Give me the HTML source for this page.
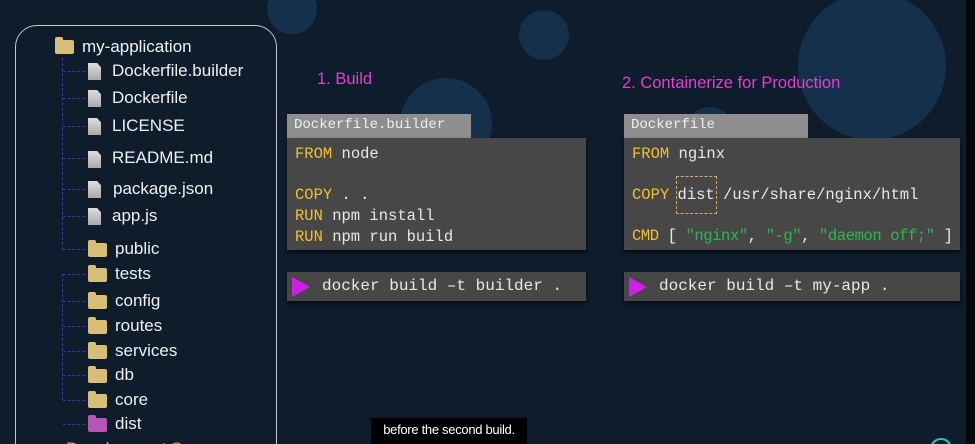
<!DOCTYPE html>
<html style="overflow:hidden;width:975px;height:444px"><head><meta charset="utf-8"><style>
*{margin:0;padding:0;box-sizing:border-box}
body{width:975px;height:444px;overflow:hidden;background:#0e1c2b;position:relative;font-family:"Liberation Sans",sans-serif}
.c{position:absolute;border-radius:50%;background:#15304a}
.panel{position:absolute;left:15px;top:25px;width:262px;height:440px;border:1.5px solid #c8c8c8;border-radius:22px}
.t{position:absolute;color:#f0f0f0;font-size:17px;line-height:20px}
.fo{position:absolute;width:19px;height:14px;background:#d9be78;border-radius:2px}
.fo:before{content:"";position:absolute;left:0;top:-3px;width:8px;height:4px;background:inherit;border-radius:2px 2px 0 0}
.fi{position:absolute;width:13px;height:17px;background:linear-gradient(#ddd,#aaa);clip-path:polygon(0 0,70% 0,100% 25%,100% 100%,0 100%)}
.h{position:absolute;border-top:1.3px dashed #4a2fa0;width:22px}
.v{position:absolute;border-left:1.3px dashed #4a2fa0}
.mono{font-family:"Liberation Mono",monospace;white-space:nowrap}
.hd{position:absolute;background:#8e8e8e;color:#efefef;font-size:14px;padding:3px 7px;height:24px}
.bd{position:absolute;background:#474747;color:#e8e8e8;font-size:15.5px;padding:6px 8px;line-height:20.7px;box-shadow:0 2px 3px #000a}
.k{color:#f0c030}.s{color:#2eb84e}
.cmd{position:absolute;background:#474747;color:#e8e8e8;font-size:16px;height:29px;line-height:29px;padding-left:35px;box-shadow:0 2px 3px #000a}
.tri{position:absolute;left:5px;top:5px;width:0;height:0;border-left:18px solid #d21fe8;border-top:10px solid transparent;border-bottom:10px solid transparent}
.ttl{position:absolute;color:#e23fd3;font-size:16.5px}
</style></head><body>
<div class="c" style="left:267px;top:-16px;width:50px;height:50px"></div>
<div class="c" style="left:519px;top:10px;width:50px;height:50px"></div>
<div class="c" style="left:400px;top:78px;width:92px;height:92px"></div>
<div class="c" style="left:798px;top:-8px;width:148px;height:148px"></div>
<div class="c" style="left:685px;top:107px;width:50px;height:50px"></div>
<div style="position:absolute;left:966px;top:0;width:9px;height:444px;background:#05090d"></div>

<div class="panel"></div>
<div class="fo" style="left:55px;top:40px"></div><div class="t" style="left:82px;top:37px">my-application</div>
<div class="v" style="left:62px;top:58px;height:192px"></div>
<div class="v" style="left:62px;top:274px;height:126px"></div>
<div class="h" style="left:63px;top:71px"></div><div class="fi" style="left:88px;top:63px"></div><div class="t" style="left:112px;top:61px">Dockerfile.builder</div>
<div class="h" style="left:63px;top:98px"></div><div class="fi" style="left:88px;top:90px"></div><div class="t" style="left:112px;top:88px">Dockerfile</div>
<div class="h" style="left:63px;top:126px"></div><div class="fi" style="left:88px;top:118px"></div><div class="t" style="left:112px;top:116px">LICENSE</div>
<div class="h" style="left:63px;top:158px"></div><div class="fi" style="left:88px;top:151px"></div><div class="t" style="left:112px;top:148px">README.md</div>
<div class="h" style="left:63px;top:189px"></div><div class="fi" style="left:88px;top:181px"></div><div class="t" style="left:113px;top:179px">package.json</div>
<div class="h" style="left:63px;top:216px"></div><div class="fi" style="left:88px;top:208px"></div><div class="t" style="left:112px;top:206px">app.js</div>
<div class="h" style="left:63px;top:249px"></div><div class="fo" style="left:88px;top:243px"></div><div class="t" style="left:115px;top:239px">public</div>
<div class="h" style="left:63px;top:274px"></div><div class="fo" style="left:88px;top:268px"></div><div class="t" style="left:115px;top:264px">tests</div>
<div class="h" style="left:63px;top:301px"></div><div class="fo" style="left:88px;top:295px"></div><div class="t" style="left:115px;top:291px">config</div>
<div class="h" style="left:63px;top:326px"></div><div class="fo" style="left:88px;top:320px"></div><div class="t" style="left:115px;top:316px">routes</div>
<div class="h" style="left:63px;top:351px"></div><div class="fo" style="left:88px;top:345px"></div><div class="t" style="left:115px;top:341px">services</div>
<div class="h" style="left:63px;top:375px"></div><div class="fo" style="left:88px;top:369px"></div><div class="t" style="left:115px;top:365px">db</div>
<div class="h" style="left:63px;top:400px"></div><div class="fo" style="left:88px;top:394px"></div><div class="t" style="left:115px;top:390px">core</div>
<div class="h" style="left:63px;top:424px"></div><div class="fo" style="left:88px;top:418px;background:#b655b6"></div><div class="t" style="left:115px;top:414px">dist</div>
<div class="t" style="left:66px;top:439px;color:#d9a640">Development S</div>

<div class="ttl" style="left:317px;top:70px">1. Build</div>
<div class="ttl" style="left:622px;top:74px">2. Containerize for Production</div>

<div class="hd mono" style="left:287px;top:114px;width:184px">Dockerfile.builder</div>
<div class="bd mono" style="left:287px;top:138px;width:299px;height:112px"><span class="k">FROM</span> node<br><br><span class="k">COPY</span> . .<br><span class="k">RUN</span> npm install<br><span class="k">RUN</span> npm run build</div>
<div class="cmd mono" style="left:287px;top:272px;width:299px"><div class="tri"></div>docker build –t builder .</div>

<div class="hd mono" style="left:624px;top:114px;width:184px">Dockerfile</div>
<div class="bd mono" style="left:624px;top:138px;width:336px;height:112px;line-height:20px"><span class="k">FROM</span> nginx<br><div style="height:21px"></div><span class="k">COPY</span> <span style="display:inline-block;border:1.5px dashed #d9aa70;padding:8px 1px;margin:-10px -3px">dist</span> /usr/share/nginx/html<br><div style="height:21px"></div><span style="letter-spacing:-0.4px"><span class="k">CMD</span> [ <span class="s">"nginx"</span>,&nbsp;<span class="s">"-g"</span>,&nbsp;<span class="s">"daemon&nbsp;off;"</span>&nbsp;]</span></div>
<div class="cmd mono" style="left:624px;top:272px;width:336px"><div class="tri"></div>docker build –t my-app .</div>

<div style="position:absolute;left:371px;top:418px;width:156px;height:26px;background:#000;color:#fff;font-size:13px;line-height:24px;text-align:center;letter-spacing:-0.3px">before the second build.</div>
<div style="position:absolute;left:930px;top:438px;width:22px;height:22px;border:2px solid #22c8d8;border-radius:50%"></div>
</body></html>
